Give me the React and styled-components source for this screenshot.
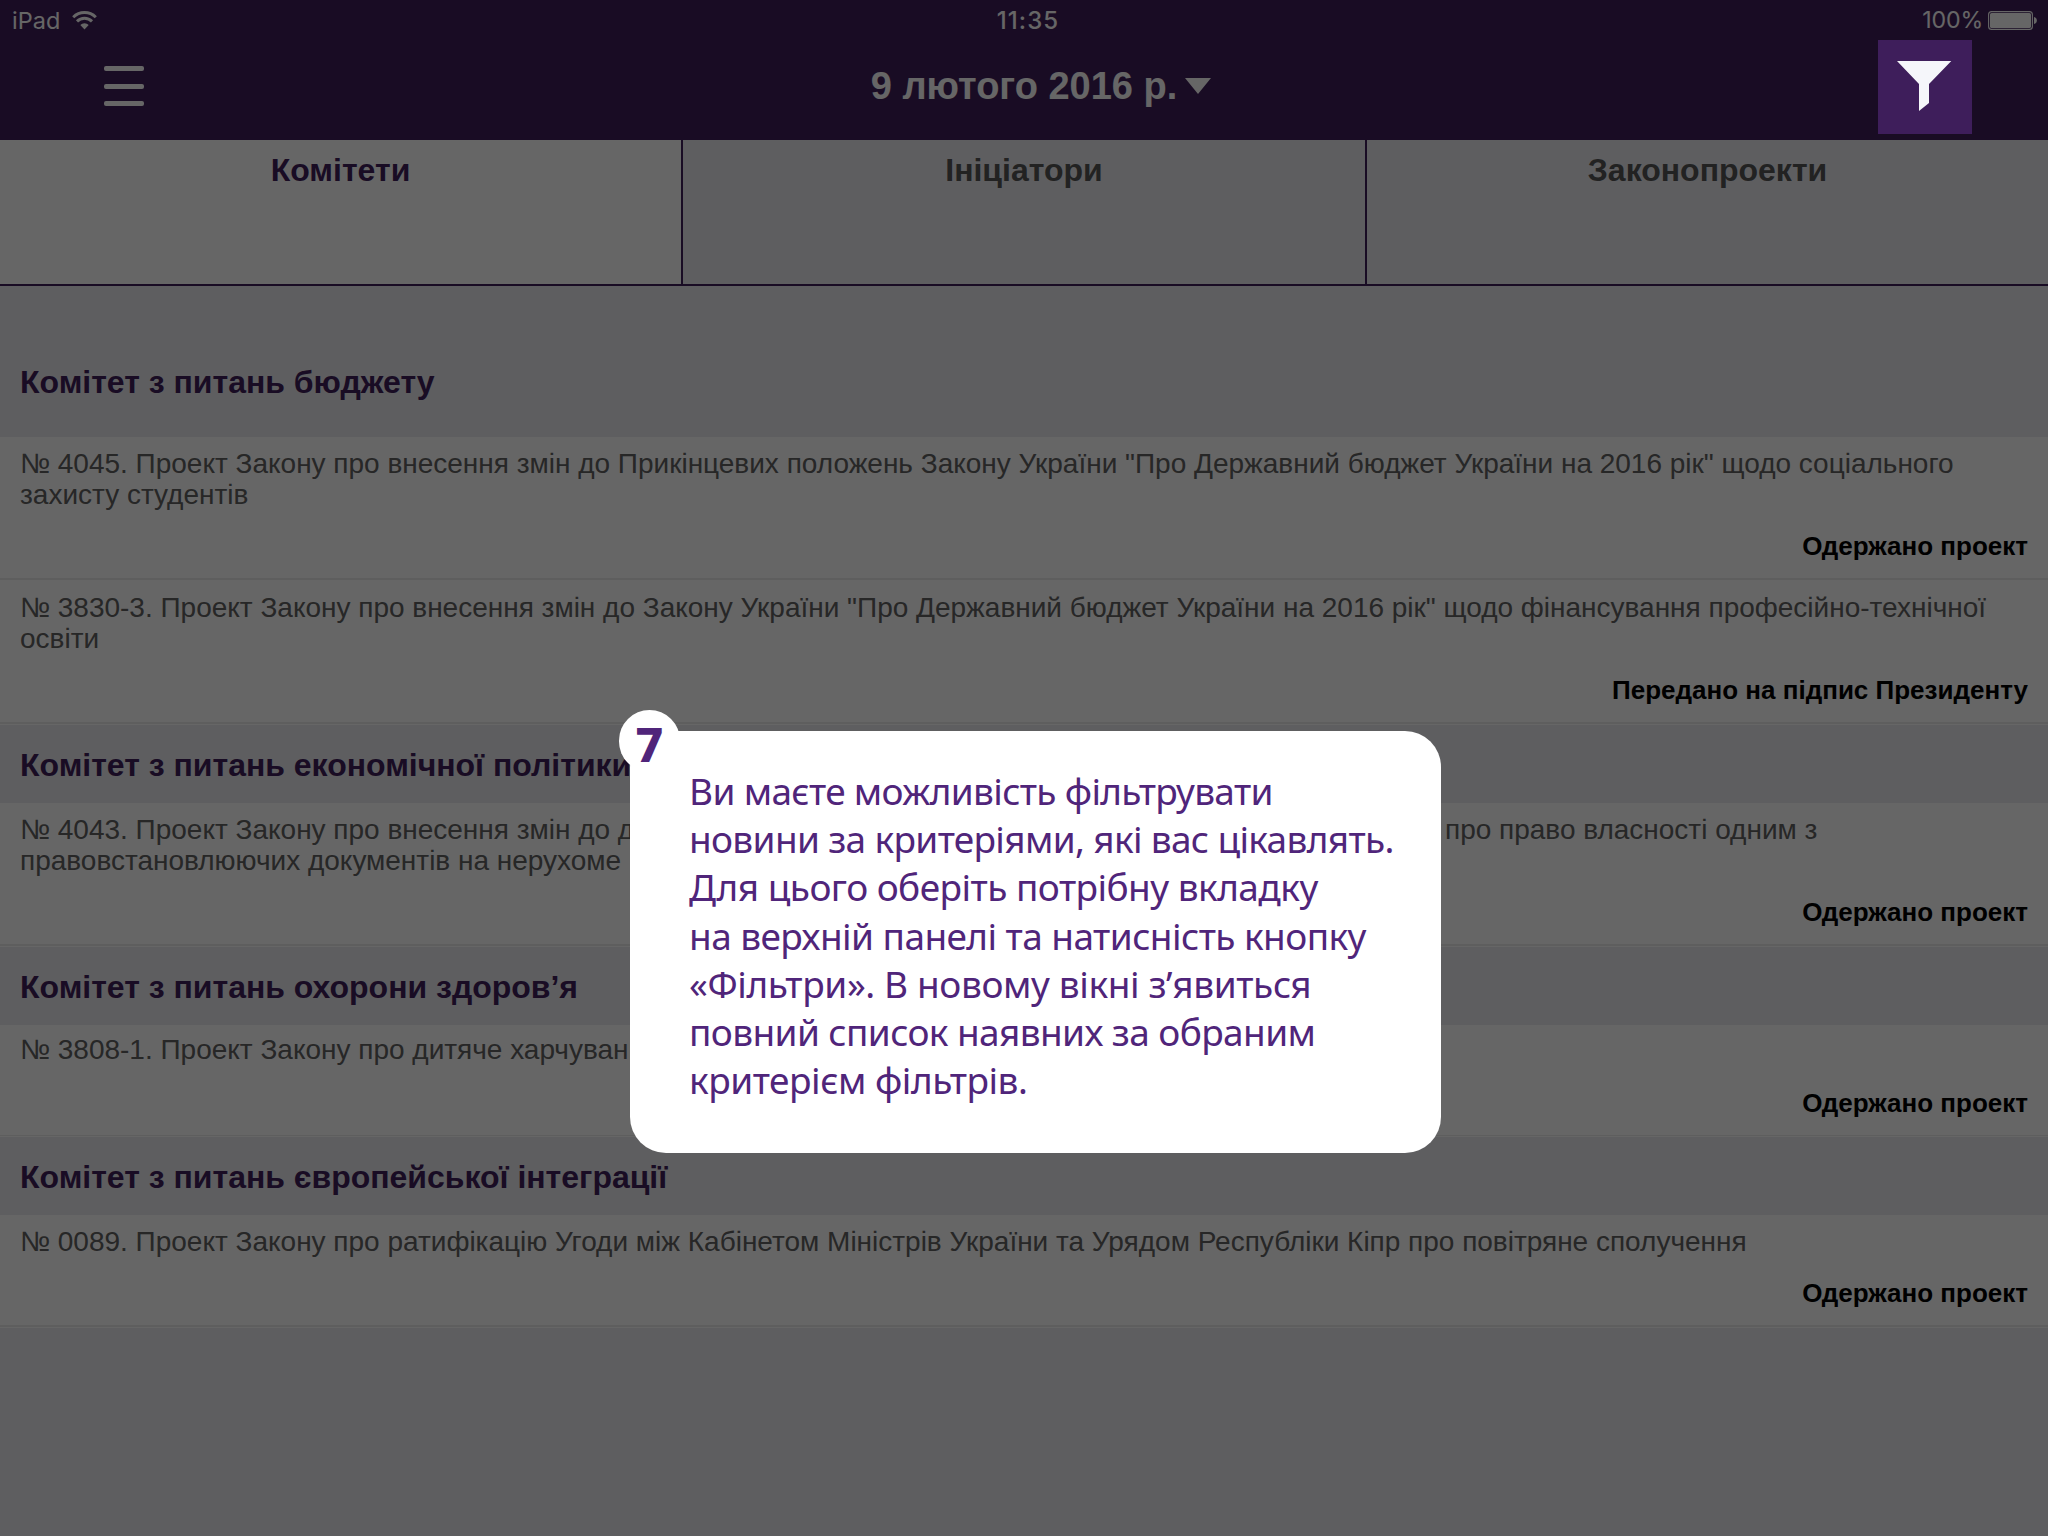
import React from "react";
import styled, { createGlobalStyle } from "styled-components";

const color = {
  header: "#3f1e5a",
  filter: "#3e1e5b",
  border: "#3f1e5a",
  panel: "#ebebf0",
  rule: "#ebebeb",
  body: "#616161",
  accent: "#50257a",
};

const Global = createGlobalStyle`
  *, *::before, *::after { box-sizing: border-box; }
  body {
    margin: 0;
    background: ${color.panel};
    font-family: "Liberation Sans", Arial, Helvetica, sans-serif;
  }
`;

const Screen = styled.div`
  position: relative;
  width: 2048px;
  height: 1536px;
  overflow: hidden;
  background: ${color.panel};
`;

const Header = styled.header`
  height: 140px;
  background: ${color.header};
  color: #fff;
`;

const StatusBar = styled.div`
  display: grid;
  grid-template-columns: 1fr auto 1fr;
  height: 40px;
  padding: 0 11px 0 12px;
  font-family: Inter, Roboto, sans-serif;
  font-size: 24px;
  line-height: 41px;
`;

const Carrier = styled.div`
  display: flex;
  align-items: center;
  gap: 12px;
  font-size: 23.5px;
`;

const Clock = styled.div`
  font-weight: 500;
  letter-spacing: 1.1px;
  padding-left: 7px;
`;

const Battery = styled.div`
  display: flex;
  align-items: center;
  justify-content: flex-end;
  gap: 5px;
  font-size: 23.2px;
  letter-spacing: -0.2px;
`;

const NavBar = styled.div`
  display: grid;
  grid-template-columns: 1fr auto 1fr;
  height: 100px;
  padding: 0 76px 0 104px;
`;

const MenuButton = styled.div`
  display: flex;
  flex-direction: column;
  justify-content: space-between;
  width: 40px;
  height: 40px;
  margin-top: 26px;
`;

const MenuBar = styled.span`
  height: 5px;
  border-radius: 2px;
  background: #fff;
`;

const DateTitle = styled.div`
  display: flex;
  gap: 8px;
  padding-left: 6px;
  font-size: 38px;
  font-weight: 700;
  line-height: 42px;
  padding-top: 25px;
`;

const Caret = styled.svg`
  margin-top: 13px;
`;

const FilterButton = styled.div`
  position: relative;
  z-index: 2;
  justify-self: end;
  width: 94px;
  height: 94px;
  background: ${color.filter};
`;

const Tabs = styled.nav`
  display: grid;
  grid-template-columns: 683px 684px 681px;
  height: 146px;
  border-bottom: 2px solid ${color.border};
`;

const Tab = styled.div`
  padding-top: 12px;
  text-align: center;
  font-size: 32px;
  font-weight: 700;
  line-height: 36px;
  color: ${(p) => (p.$active ? color.header : "#555")};
  background: ${(p) => (p.$active ? "#fff" : color.panel)};
  border-right: ${(p) => (p.$last ? "0" : `2px solid ${color.border}`)};
`;

const SectionHeader = styled.h2`
  display: flex;
  align-items: flex-end;
  height: ${(p) => p.$height}px;
  margin: 0;
  padding: 0 20px ${(p) => p.$bottom}px;
  font-size: 32px;
  font-weight: 700;
  line-height: 36px;
  letter-spacing: -0.01px;
  color: ${color.header};
  background: ${color.panel};
`;

const Bill = styled.article`
  display: flex;
  flex-direction: column;
  justify-content: space-between;
  height: ${(p) => p.$height}px;
  padding: ${(p) => p.$top}px 20px 17px;
  background: #fff;
  border-bottom: ${(p) => p.$rule}px solid ${color.rule};
`;

const BillTitle = styled.p`
  margin: 0;
  font-size: 28px;
  line-height: 31px;
  letter-spacing: -0.008px;
  color: ${color.body};
  white-space: nowrap;
`;

const SplitLine = styled.span`
  display: grid;
  grid-template-columns: 1425px auto;
  justify-content: start;
`;

const BillStatus = styled.p`
  margin: 0;
  text-align: right;
  font-size: 26px;
  font-weight: 700;
  line-height: 30px;
  color: #000;
`;

const SectionEnd = styled.div`
  height: 1px;
  background: #fff;
`;

const Scrim = styled.div`
  position: absolute;
  inset: 0;
  z-index: 1;
  background: rgba(0, 0, 0, 0.6);
`;

const Popover = styled.section`
  position: absolute;
  z-index: 3;
  left: 630.3px;
  top: 731px;
  width: 810.6px;
  height: 422.3px;
  padding: 36px 0 0 58.7px;
  border-radius: 36px;
  background: #fff;
  color: ${color.accent};
  font-family: "Noto Sans", "Open Sans", sans-serif;
`;

const Step = styled.div`
  position: absolute;
  left: -11.8px;
  top: -20.7px;
  width: 61.5px;
  height: 61.5px;
  border-radius: 50%;
  background: #fff;
  font-size: 48px;
  font-weight: 800;
  line-height: 67px;
  text-align: center;
`;

const HintLine = styled.div`
  font-size: 37px;
  line-height: 48.2px;
  letter-spacing: ${(p) => p.$tracking}px;
  white-space: nowrap;
`;

const sections = [
  {
    title: "Комітет з питань бюджету",
    height: 151,
    bottom: 37,
    bills: [
      {
        height: 143,
        top: 11,
        lines: [
          '№ 4045. Проект Закону про внесення змін до Прикінцевих положень Закону України "Про Державний бюджет України на 2016 рік" щодо соціального',
          "захисту студентів",
        ],
        status: "Одержано проект",
      },
      {
        height: 144,
        top: 12,
        lines: [
          '№ 3830-3. Проект Закону про внесення змін до Закону України "Про Державний бюджет України на 2016 рік" щодо фінансування професійно-технічної',
          "освіти",
        ],
        status: "Передано на підпис Президенту",
      },
    ],
  },
  {
    title: "Комітет з питань економічної політики",
    height: 78,
    bottom: 20,
    bills: [
      {
        height: 143,
        top: 11,
        lines: [
          "№ 4043. Проект Закону про внесення змін до деяких",
          "правовстановлюючих документів на нерухоме",
        ],
        tail: "про право власності одним з",
        status: "Одержано проект",
      },
    ],
  },
  {
    title: "Комітет з питань охорони здоров’я",
    height: 78,
    bottom: 20,
    bills: [
      {
        height: 111,
        top: 9,
        rule: 1,
        lines: ["№ 3808-1. Проект Закону про дитяче харчування"],
        status: "Одержано проект",
      },
    ],
  },
  {
    title: "Комітет з питань європейської інтеграції",
    height: 78,
    bottom: 20,
    bills: [
      {
        height: 112,
        top: 11,
        lines: [
          "№ 0089. Проект Закону про ратифікацію Угоди між Кабінетом Міністрів України та Урядом Республіки Кіпр про повітряне сполучення",
        ],
        status: "Одержано проект",
      },
    ],
  },
];

const hint = [
  ["Ви маєте можливість фільтрувати", -0.65],
  ["новини за критеріями, які вас цікавлять.", -0.66],
  ["Для цього оберіть потрібну вкладку", -0.53],
  ["на верхній панелі та натисність кнопку", -0.56],
  ["«Фільтри». В новому вікні з’явиться", -0.38],
  ["повний список наявних за обраним", -0.6],
  ["критерієм фільтрів.", -0.46],
];

function WifiIcon() {
  return (
    <svg width="25" height="19" viewBox="0 0 25 19" fill="none" stroke="#fff">
      <path d="M1.2 6.2 A16 16 0 0 1 23.8 6.2" strokeWidth="3" />
      <path d="M5 10.4 A10.6 10.6 0 0 1 20 10.4" strokeWidth="3" />
      <path d="M8.3 14 A6 6 0 0 1 16.7 14 L12.5 18.4 Z" fill="#fff" stroke="none" />
    </svg>
  );
}

function BatteryIcon() {
  return (
    <svg width="49" height="19" viewBox="0 0 49 19">
      <rect x="0.6" y="0.6" width="43.8" height="17.8" rx="3" fill="none" stroke="#fff" strokeWidth="1.1" />
      <rect x="2" y="2" width="41" height="15" rx="1.6" fill="#fff" />
      <path d="M46 6 C49.8 6.6 49.8 12.4 46 13 Z" fill="#fff" />
    </svg>
  );
}

function FunnelIcon() {
  return (
    <svg width="94" height="94" viewBox="0 0 94 94" fill="#f5f6fa">
      <path d="M19 21 H73.3 L51 44 V63 L41 71 V44 Z" />
    </svg>
  );
}

function BillRow({ bill }) {
  const [first, second] = bill.lines;
  return (
    <Bill $height={bill.height} $top={bill.top} $rule={bill.rule || 2}>
      <BillTitle>
        {bill.tail ? (
          <SplitLine>
            <span>{first}</span>
            <span>{bill.tail}</span>
          </SplitLine>
        ) : (
          first
        )}
        {second && !bill.tail && <br />}
        {second}
      </BillTitle>
      <BillStatus>{bill.status}</BillStatus>
    </Bill>
  );
}

export default function App() {
  return (
    <Screen>
      <Global />
      <Header>
        <StatusBar>
          <Carrier>
            iPad
            <WifiIcon />
          </Carrier>
          <Clock>11:35</Clock>
          <Battery>
            100%
            <BatteryIcon />
          </Battery>
        </StatusBar>
        <NavBar>
          <MenuButton>
            <MenuBar />
            <MenuBar />
            <MenuBar />
          </MenuButton>
          <DateTitle>
            9 лютого 2016 р.
            <Caret width="26" height="16" viewBox="0 0 26 16" fill="#fff">
              <path d="M0 0 H26 L13 16 Z" />
            </Caret>
          </DateTitle>
          <FilterButton>
            <FunnelIcon />
          </FilterButton>
        </NavBar>
      </Header>
      <Tabs>
        <Tab $active>Комітети</Tab>
        <Tab>Ініціатори</Tab>
        <Tab $last>Законопроекти</Tab>
      </Tabs>
      <main>
        {sections.map((s) => (
          <section key={s.title}>
            <SectionHeader $height={s.height} $bottom={s.bottom}>
              {s.title}
            </SectionHeader>
            {s.bills.map((b) => (
              <BillRow key={b.lines[0]} bill={b} />
            ))}
            <SectionEnd />
          </section>
        ))}
      </main>
      <Scrim />
      <Popover>
        <Step>7</Step>
        {hint.map(([text, tracking]) => (
          <HintLine key={text} $tracking={tracking}>
            {text}
          </HintLine>
        ))}
      </Popover>
    </Screen>
  );
}
